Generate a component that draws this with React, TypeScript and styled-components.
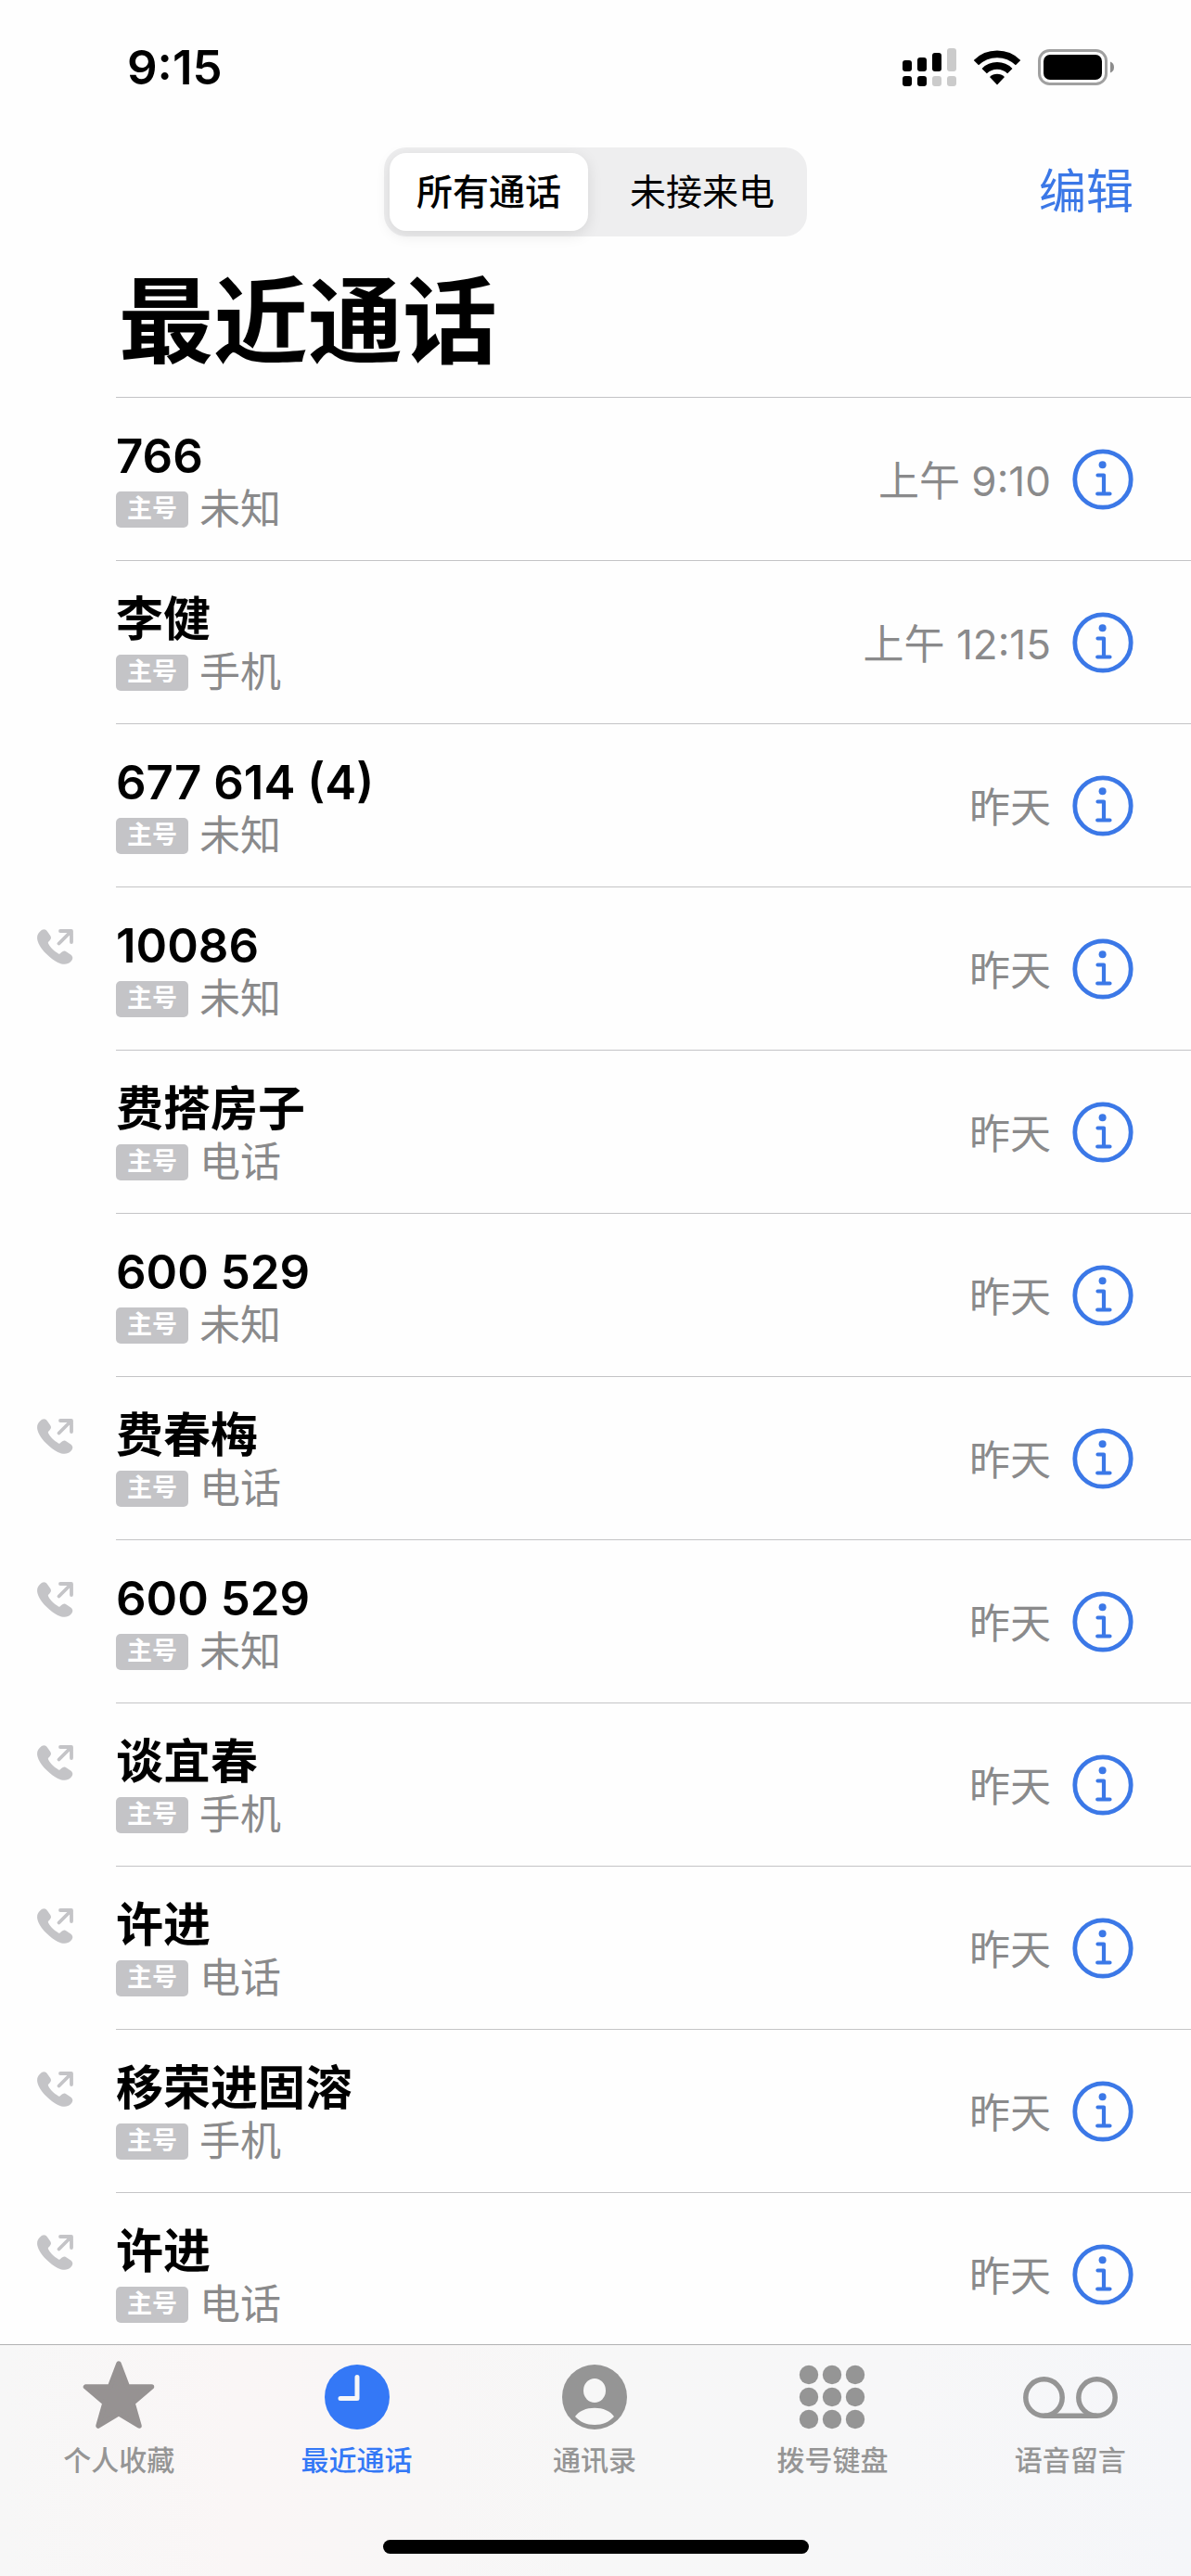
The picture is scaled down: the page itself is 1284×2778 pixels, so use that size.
import React, { useState } from 'react';
import styled, { createGlobalStyle } from 'styled-components';

const blue = '#3478f6';
const linkBlue = '#3b78e7';
const grey = '#8a8a8b';
const tabGrey = '#959595';

const GlobalStyle = createGlobalStyle`
  *, *::before, *::after { box-sizing: border-box; }
  body {
    margin: 0;
    background: #fefefe;
    color: #000;
    font-family: Inter, "Noto Sans CJK SC", sans-serif;
  }
  button { border: 0; padding: 0; background: none; font: inherit; color: inherit; cursor: pointer; }
`;

const Screen = styled.div`
  height: 100vh;
  display: flex;
  flex-direction: column;
  overflow: hidden;
`;

const StatusBar = styled.header`
  flex: none;
  height: 144px;
  padding: 2px 82px 0 137px;
  display: flex;
  align-items: center;
  justify-content: space-between;
`;

const Clock = styled.time`
  font-size: 51px;
  line-height: 60px;
  font-weight: 600;
`;

const StatusIcons = styled.div`
  display: flex;
  align-items: center;
  gap: 18px;
  svg { display: block; }
`;

const NavBar = styled.div`
  flex: none;
  height: 126px;
  padding: 0 62px;
  display: grid;
  grid-template-columns: 1fr auto 1fr;
  align-items: center;
`;

const Segments = styled.div`
  grid-column: 2;
  width: 456px;
  height: 96px;
  padding: 6px;
  display: flex;
  gap: 16px;
  border-radius: 24px;
  background: #eeeeef;
`;

const Segment = styled.button<{ $on: boolean }>`
  flex: 1 1 0;
  border-radius: 18px;
  font-size: 39px;
  line-height: 56px;
  font-weight: ${(p) => (p.$on ? 500 : 400)};
  background: ${(p) => (p.$on ? '#fff' : 'transparent')};
  box-shadow: ${(p) => (p.$on ? '0 4px 16px rgba(0, 0, 0, 0.1)' : 'none')};
`;

const EditButton = styled.button`
  justify-self: end;
  color: ${linkBlue};
  font-size: 51px;
  line-height: 72px;
`;

const Title = styled.h1`
  flex: none;
  margin: 0;
  padding: 3px 128px 7px;
  font-size: 102px;
  line-height: 148px;
  font-weight: 700;
`;

const CallList = styled.ul`
  flex: 1 1 0;
  min-height: 0;
  overflow: hidden;
  margin: 0;
  padding: 0;
  list-style: none;
`;

const CallRow = styled.li`
  height: 176px;
  display: flex;
`;

const Direction = styled.div`
  flex: none;
  width: 125px;
  padding: 46px 0 0 40px;
  svg { display: block; }
`;

const CallBody = styled.div`
  flex: 1;
  min-width: 0;
  padding-right: 62px;
  display: flex;
  align-items: center;
  border-top: 1px solid #c4c4c6;
`;

const Caller = styled.div`
  flex: 1;
  min-width: 0;
  padding-top: 5px;
`;

const Name = styled.div`
  font-size: 51px;
  line-height: 60px;
  font-weight: 600;
`;

const Detail = styled.div`
  display: flex;
  align-items: center;
  gap: 12px;
  height: 54px;
  color: ${grey};
  font-size: 44px;
  line-height: 54px;
`;

const LineBadge = styled.span`
  width: 78px;
  height: 39px;
  border-radius: 5px;
  background: #c4c4c7;
  color: #fff;
  font-size: 27px;
  line-height: 38px;
  font-weight: 700;
  text-align: center;
`;

const When = styled.time`
  padding-top: 5px;
  color: ${grey};
  font-size: 44px;
  line-height: 60px;
  white-space: nowrap;
`;

const InfoButton = styled.button`
  width: 66px;
  height: 66px;
  margin-left: 23px;
  svg { display: block; }
`;

const TabBar = styled.nav`
  flex: none;
  height: 250px;
  display: flex;
  flex-direction: column;
  align-items: center;
  justify-content: space-between;
  padding-bottom: 24px;
  border-top: 1px solid #b2b2b3;
  background: linear-gradient(90deg, #f7f7f7 0%, #faf6f6 20%, #f8f6f6 36%, #f7f7f7 50%, #f7f7f8 75%, #f5f6f9 100%);
`;

const Tabs = styled.div`
  align-self: stretch;
  display: flex;
  padding-right: 2px;
`;

const Tab = styled.button<{ $on: boolean }>`
  flex: 1 1 0;
  display: flex;
  flex-direction: column;
  align-items: center;
  gap: 4px;
  padding-top: 14px;
  color: ${(p) => (p.$on ? blue : tabGrey)};
  font-size: 30px;
  line-height: 44px;
  font-weight: 500;
  svg { display: block; }
`;

const HomeIndicator = styled.div`
  width: 459px;
  height: 15px;
  border-radius: 8px;
  background: #000;
`;

const SignalIcon = () => (
  <svg width="58" height="42" viewBox="0 0 58 42">
    <g fill="#000">
      <rect x="0" y="13" width="10" height="12" rx="3" />
      <rect x="16" y="10" width="10" height="15" rx="3" />
      <rect x="32" y="5" width="10" height="20" rx="3" />
      <rect x="0" y="30" width="10" height="11" rx="3" />
      <rect x="16" y="30" width="10" height="11" rx="3" />
    </g>
    <g fill="#cbcbcb">
      <rect x="48" y="0" width="10" height="25" rx="3" />
      <rect x="32" y="30" width="10" height="11" rx="3" />
      <rect x="48" y="30" width="10" height="11" rx="3" />
    </g>
  </svg>
);

const WifiIcon = () => (
  <svg width="52" height="38" viewBox="0 0 52 38">
    <g fill="none" stroke="#000" strokeWidth="7.6">
      <path d="M3.4 13.6a32.2 32.2 0 0 1 45.2 0" />
      <path d="M12.2 22.6a19.6 19.6 0 0 1 27.6 0" />
    </g>
    <path d="M26 37.5 18 29a11.4 11.4 0 0 1 16 0Z" />
  </svg>
);

const BatteryIcon = () => (
  <svg width="83" height="40" viewBox="0 0 83 40">
    <rect x="1.5" y="1.5" width="72" height="36" rx="11" fill="none" stroke="#a0a0a0" strokeWidth="3" />
    <rect x="6" y="6" width="63" height="27" rx="7" />
    <path d="M78 13.500q4 1.500 4 6t-4 6Z" fill="#8c8c8c" />
  </svg>
);

const OutgoingIcon = () => (
  <svg width="39" height="39" viewBox="0 0 39 39">
    <path
      d="M3.200 2.600C6-.4 9-.3 11 2.400l3.200 4.600c1.300 2 1 3.700-.8 5.500l-1 1c-.7.700-.7 1.300-.2 2.200 1.200 2.300 3 4.500 4.600 6.100s4 3.400 6.200 4.600c.9.500 1.500.4 2.200-.3l1-1c1.800-1.700 3.500-2 5.500-.7l4.500 3.100c2.700 1.900 2.800 5 .1 7.500-3.400 3.400-8.100 3.600-14 .9-4-1.900-8-4.800-12-8.800S3.300 19.200 1.500 15.200C-.7 10.200-.5 5.900 3.200 2.600Z"
      fill="#c4c4c7"
    />
    <path d="M23.500 15.500 36 3M25 2h12v12" fill="none" stroke="#c4c4c7" strokeWidth="3.800" strokeLinecap="round" strokeLinejoin="round" />
  </svg>
);

const InfoIcon = () => (
  <svg width="66" height="66" viewBox="0 0 66 66" fill="none" stroke={linkBlue}>
    <circle cx="33" cy="33" r="30.200" strokeWidth="4.800" />
    <circle cx="32.600" cy="17.200" r="4" fill={linkBlue} stroke="none" />
    <path d="M27.500 28.500H34V48.500M27.200 48.500H40.500" strokeWidth="4.200" strokeLinecap="round" strokeLinejoin="round" />
  </svg>
);

const StarIcon = () => (
  <svg width="84" height="84" viewBox="0 0 84 84">
    <path
      d="M42 6 51.400 30.700 77.500 31 57 48.500 64 73 42 59.600 20 73 27 48.500 6.500 31 32.600 30.700Z"
      fill="#969292"
      stroke="#969292"
      strokeWidth="5.500"
      strokeLinejoin="round"
    />
  </svg>
);

const RecentIcon = () => (
  <svg width="84" height="84" viewBox="0 0 84 84">
    <circle cx="42" cy="42" r="35" fill="currentColor" />
    <path d="M42 20.500V43.500H24" fill="none" stroke="#f7f7f7" strokeWidth="5" strokeLinecap="round" strokeLinejoin="round" />
  </svg>
);

const ContactIcon = () => (
  <svg width="84" height="84" viewBox="0 0 84 84">
    <circle cx="42" cy="42" r="35" fill="currentColor" />
    <ellipse cx="42" cy="35" rx="12" ry="13" fill="#f7f7f7" />
    <path d="M21 63C25 57 33 53.700 42 53.700S59 57 63 63C58 68.800 50.500 72 42 72S26 68.800 21 63Z" fill="#f7f7f7" />
  </svg>
);

const KeypadIcon = () => (
  <svg width="84" height="84" viewBox="0 0 84 84" fill="currentColor">
    {[18, 42, 66].map((y) => [17, 42, 67].map((x) => <circle key={`${x}-${y}`} cx={x} cy={y} r="10.200" />))}
  </svg>
);

const VoicemailIcon = () => (
  <svg width="104" height="84" viewBox="0 0 104 84" fill="none" stroke="currentColor" strokeWidth="5.500">
    <circle cx="23.500" cy="42.500" r="19.700" />
    <circle cx="80.500" cy="42.500" r="19.700" />
    <path d="M23.500 62.200H80.500" />
  </svg>
);

type Call = { name: string; label: string; when: string; outgoing?: boolean };

const calls: Call[] = [
  { name: '766', label: '未知', when: '上午 9:10' },
  { name: '李健', label: '手机', when: '上午 12:15' },
  { name: '677 614 (4)', label: '未知', when: '昨天' },
  { name: '10086', label: '未知', when: '昨天', outgoing: true },
  { name: '费搭房子', label: '电话', when: '昨天' },
  { name: '600 529', label: '未知', when: '昨天' },
  { name: '费春梅', label: '电话', when: '昨天', outgoing: true },
  { name: '600 529', label: '未知', when: '昨天', outgoing: true },
  { name: '谈宜春', label: '手机', when: '昨天', outgoing: true },
  { name: '许进', label: '电话', when: '昨天', outgoing: true },
  { name: '移荣进固溶', label: '手机', when: '昨天', outgoing: true },
  { name: '许进', label: '电话', when: '昨天', outgoing: true },
];

const filters = ['所有通话', '未接来电'];

const tabs = [
  { label: '个人收藏', Icon: StarIcon },
  { label: '最近通话', Icon: RecentIcon },
  { label: '通讯录', Icon: ContactIcon },
  { label: '拨号键盘', Icon: KeypadIcon },
  { label: '语音留言', Icon: VoicemailIcon },
];

export default function App() {
  const [filter, setFilter] = useState(0);
  const [tab, setTab] = useState(1);

  return (
    <Screen lang="zh-CN">
      <GlobalStyle />
      <StatusBar>
        <Clock>9:15</Clock>
        <StatusIcons>
          <SignalIcon />
          <WifiIcon />
          <BatteryIcon />
        </StatusIcons>
      </StatusBar>
      <NavBar>
        <Segments>
          {filters.map((label, i) => (
            <Segment key={label} type="button" $on={i === filter} aria-pressed={i === filter} onClick={() => setFilter(i)}>
              {label}
            </Segment>
          ))}
        </Segments>
        <EditButton type="button">编辑</EditButton>
      </NavBar>
      <Title>最近通话</Title>
      <CallList>
        {calls.map((call, i) => (
          <CallRow key={i}>
            <Direction>{call.outgoing && <OutgoingIcon />}</Direction>
            <CallBody>
              <Caller>
                <Name>{call.name}</Name>
                <Detail>
                  <LineBadge>主号</LineBadge>
                  {call.label}
                </Detail>
              </Caller>
              <When>{call.when}</When>
              <InfoButton type="button" aria-label="详细信息">
                <InfoIcon />
              </InfoButton>
            </CallBody>
          </CallRow>
        ))}
      </CallList>
      <TabBar>
        <Tabs>
          {tabs.map(({ label, Icon }, i) => (
            <Tab key={label} type="button" $on={i === tab} onClick={() => setTab(i)}>
              <Icon />
              {label}
            </Tab>
          ))}
        </Tabs>
        <HomeIndicator />
      </TabBar>
    </Screen>
  );
}
